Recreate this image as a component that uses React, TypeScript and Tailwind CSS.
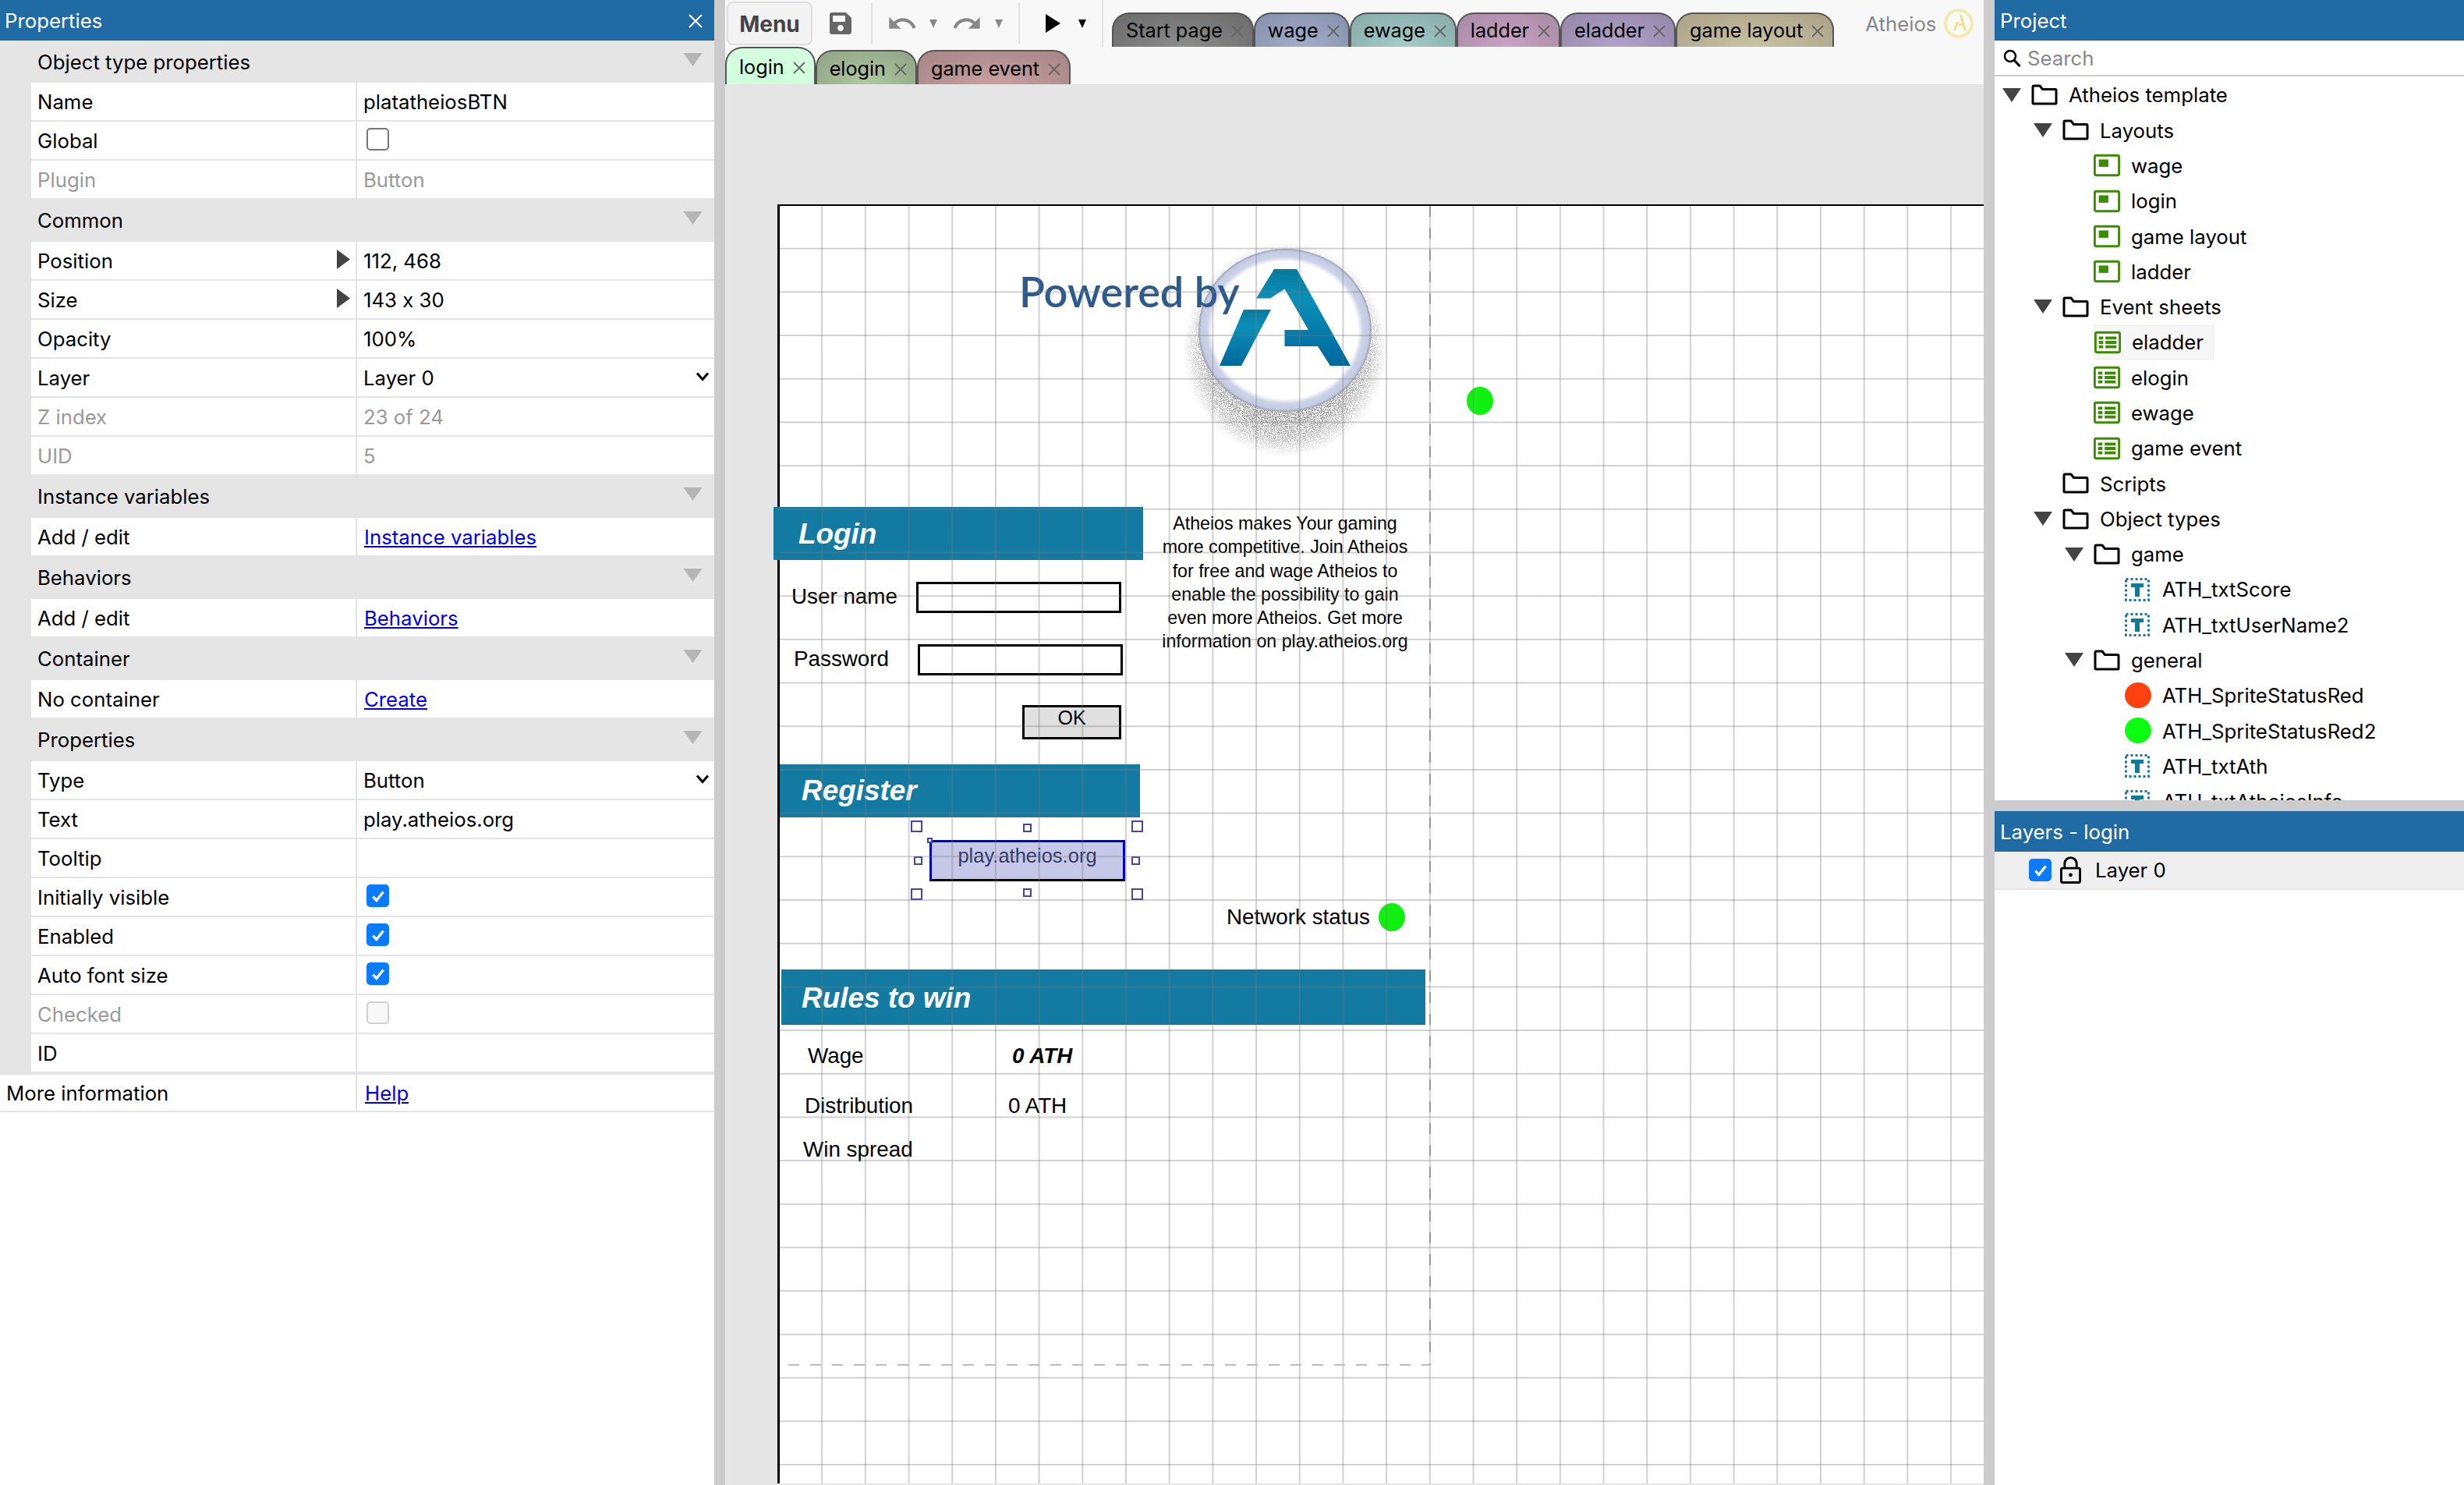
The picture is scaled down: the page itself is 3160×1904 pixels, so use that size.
import type { ReactNode } from "react";
import { FaSave } from "react-icons/fa";
import { MdRedo, MdUndo } from "react-icons/md";

type PropRow =
  | { kind: "section"; label: string; first?: boolean }
  | {
      kind: "row";
      label: string;
      value?: string;
      link?: string;
      check?: "on" | "off" | "disabled";
      muted?: boolean;
      arrow?: boolean;
      select?: boolean;
      last?: boolean;
    };

const propRows: PropRow[] = [
  { kind: "section", label: "Object type properties", first: true },
  { kind: "row", label: "Name", value: "platatheiosBTN" },
  { kind: "row", label: "Global", check: "off" },
  { kind: "row", label: "Plugin", value: "Button", muted: true, last: true },
  { kind: "section", label: "Common" },
  { kind: "row", label: "Position", value: "112, 468", arrow: true },
  { kind: "row", label: "Size", value: "143 x 30", arrow: true },
  { kind: "row", label: "Opacity", value: "100%" },
  { kind: "row", label: "Layer", value: "Layer 0", select: true },
  { kind: "row", label: "Z index", value: "23 of 24", muted: true },
  { kind: "row", label: "UID", value: "5", muted: true, last: true },
  { kind: "section", label: "Instance variables" },
  { kind: "row", label: "Add / edit", link: "Instance variables", last: true },
  { kind: "section", label: "Behaviors" },
  { kind: "row", label: "Add / edit", link: "Behaviors", last: true },
  { kind: "section", label: "Container" },
  { kind: "row", label: "No container", link: "Create", last: true },
  { kind: "section", label: "Properties" },
  { kind: "row", label: "Type", value: "Button", select: true },
  { kind: "row", label: "Text", value: "play.atheios.org" },
  { kind: "row", label: "Tooltip" },
  { kind: "row", label: "Initially visible", check: "on" },
  { kind: "row", label: "Enabled", check: "on" },
  { kind: "row", label: "Auto font size", check: "on" },
  { kind: "row", label: "Checked", check: "disabled", muted: true },
  { kind: "row", label: "ID" },
];

function CheckBox({ state }: { state: "on" | "off" | "disabled" }) {
  if (state === "on") {
    return (
      <span className="flex h-[29px] w-[29px] items-center justify-center rounded-[5px] bg-[#0a7bff]">
        <svg viewBox="0 0 20 20" className="h-[22px] w-[22px]">
          <path d="M4 10.5l4 4.5 8-10" fill="none" stroke="#fff" strokeWidth="3" />
        </svg>
      </span>
    );
  }
  if (state === "disabled") {
    return <span className="block h-[29px] w-[29px] rounded-[5px] border-2 border-[#d0d0d0] bg-[#f8f8f8]" />;
  }
  return <span className="block h-[29px] w-[29px] rounded-[5px] border-2 border-[#767676] bg-white" />;
}

function Chevron() {
  return (
    <svg viewBox="0 0 18 12" className="absolute right-[6px] top-[17px] h-[12px] w-[18px]">
      <path d="M2 1.5L9 9.500l7-8" fill="none" stroke="#000" strokeWidth="3" />
    </svg>
  );
}

function PropertiesPanel() {
  return (
    <div className="flex w-[916px] shrink-0 flex-col bg-white">
      <div className="flex h-[52px] items-center justify-between bg-[#206ba4] pl-[6px] pr-[14px] pt-[2px] text-white">
        <span>Properties</span>
        <svg viewBox="0 0 20 20" className="h-[20px] w-[20px]">
          <path d="M2 2l16 16M18 2L2 18" stroke="#fff" strokeWidth="2" />
        </svg>
      </div>
      {propRows.map((row, i) =>
        row.kind === "section" ? (
          <div
            key={i}
            className={`flex items-center justify-between bg-[#e5e5e5] pl-[48px] pr-[15px] pt-[2px] ${row.first ? "h-[54px]" : "h-[56px]"}`}
          >
            <span>{row.label}</span>
            <svg viewBox="0 0 24 17" className="mb-[8px] h-[17px] w-[25px]">
              <path d="M0 0h24L12 17z" fill="#b5b5b5" />
            </svg>
          </div>
        ) : (
          <div key={i} className="bg-[#e5e5e5] pl-[40px]">
            <div className={`flex h-[48px] bg-white ${row.last ? "" : "mb-[2px]"}`}>
              <div
                className={`relative flex w-[418px] shrink-0 items-center border-r-2 border-[#e5e5e5] pl-[8px] pt-[2px] ${row.muted ? "text-[#999]" : ""}`}
              >
                {row.label}
                {row.arrow && (
                  <svg viewBox="0 0 17 25" className="absolute right-[7px] top-[10px] h-[25px] w-[17px]">
                    <path d="M0 0l17 12.5L0 25z" fill="#444" />
                  </svg>
                )}
              </div>
              <div className={`relative flex flex-1 items-center pl-[8px] pt-[2px] ${row.muted ? "text-[#999]" : ""}`}>
                {row.value}
                {row.link && <a className="pl-[1px] text-[#0000ee] underline">{row.link}</a>}
                {row.check && (
                  <span className="mb-[5px] pl-[4px]">
                    <CheckBox state={row.check} />
                  </span>
                )}
                {row.select && <Chevron />}
              </div>
            </div>
          </div>
        ),
      )}
      <div className="flex h-[50px] border-y-2 border-[#e5e5e5]">
        <div className="flex w-[458px] items-center border-r-2 border-[#e5e5e5] pl-[8px] pt-[2px]">More information</div>
        <div className="flex items-center pl-[10px] pt-[2px]">
          <a className="text-[#0000ee] underline">Help</a>
        </div>
      </div>
    </div>
  );
}

function Tab({ label, tone, active, low }: { label: string; tone: string; active?: boolean; low?: boolean }) {
  return (
    <div
      className={`flex items-center rounded-t-[22px] border-x-2 border-t-2 border-[#555] pl-[16px] pr-[11px] text-[25.200px] text-black ${low ? "pt-[4px]" : "pt-[2px]"} ${active ? "h-[48px]" : "h-[44px]"} ${tone}`}
    >
      <span>{label}</span>
      <svg viewBox="0 0 16 16" className="ml-[11px] h-[16px] w-[16px]">
        <path d="M1 1l14 14M15 1L1 15" stroke="#666" strokeWidth="1.8" />
      </svg>
    </div>
  );
}

function Caret({ dark }: { dark?: boolean }) {
  return (
    <svg viewBox="0 0 10 11" className="h-[11px] w-[10px]">
      <path d="M0 0h10L5 11z" fill={dark ? "#000" : "#888"} />
    </svg>
  );
}

function Toolbar() {
  return (
    <div className="h-[108px] bg-[#f8f8f8]">
      <div className="flex h-[60px] items-end pl-[2px]">
        <div className="mb-[2px] flex h-[56px] w-[110px] items-center justify-center rounded-[8px] border-2 border-[#dedede] bg-[#f3f3f3] pt-[2px] text-[28px] font-bold text-[#444]">
          Menu
        </div>
        <div className="mb-[4px] flex h-[52px] items-center self-end">
          <FaSave className="ml-[21px] h-[32px] w-[30px] text-[#666]" />
          <div className="ml-[24px] h-[52px] w-[2px] bg-[#e2e2e2]" />
          <MdUndo className="ml-[18px] h-[44px] w-[40px] text-[#888]" />
          <span className="ml-[15px]">
            <Caret />
          </span>
          <MdRedo className="ml-[18px] h-[44px] w-[40px] text-[#888]" />
          <span className="ml-[16px]">
            <Caret />
          </span>
          <div className="ml-[20px] h-[52px] w-[2px] bg-[#e2e2e2]" />
          <svg viewBox="0 0 19 24" className="ml-[33px] h-[24px] w-[19px]">
            <path d="M0 0l19 12L0 24z" fill="#000" />
          </svg>
          <span className="ml-[23px]">
            <Caret dark />
          </span>
          <div className="ml-[20px] h-[60px] w-[2px] bg-[#e2e2e2]" />
        </div>
        <div className="ml-[11px] flex">
          <Tab label="Start page" tone="bg-[radial-gradient(ellipse_at_50%_100%,#8c8c8c,#6a6a6a)]" />
          <Tab label="wage" tone="bg-[radial-gradient(ellipse_at_50%_100%,#a2aecb,#8490ab)]" />
          <Tab label="ewage" tone="bg-[radial-gradient(ellipse_at_50%_100%,#a2cdc9,#87aaa7)]" />
          <Tab label="ladder" tone="bg-[radial-gradient(ellipse_at_50%_100%,#c9a2c4,#a78aa3)]" />
          <Tab label="eladder" tone="bg-[radial-gradient(ellipse_at_50%_100%,#b2a2cb,#9487a8)]" />
          <Tab label="game layout" tone="bg-[radial-gradient(ellipse_at_50%_100%,#c9c2a2,#a9a287)]" />
        </div>
        <span className="mb-[9px] ml-[40px] text-[#888]">Atheios</span>
        <svg viewBox="0 0 38 38" className="mb-[11px] ml-[10px] h-[38px] w-[38px]">
          <circle cx="19" cy="19" r="17" fill="#fbfaf0" stroke="#f3e9b4" strokeWidth="4" />
          <path d="M20 8h3l6 20h-3l-2-6h-5v-3h4zM16 17h3l-4 11h-3z" fill="#eadf9c" />
        </svg>
      </div>
      <div className="flex h-[48px] items-end">
        <Tab label="login" active low tone="bg-[radial-gradient(ellipse_at_50%_100%,#ccffd9,#d6fde0)]" />
        <Tab label="elogin" low tone="bg-[radial-gradient(ellipse_at_50%_100%,#aec9a0,#8fa384)]" />
        <Tab label="game event" low tone="bg-[radial-gradient(ellipse_at_50%_100%,#c9a0a0,#a58585)]" />
      </div>
    </div>
  );
}

function PoweredLogo() {
  return (
    <svg viewBox="0 0 300 310" className="absolute left-[500px] top-[26px] h-[310px] w-[300px]">
      <defs>
        <radialGradient id="halo" cx="50%" cy="50%" r="50%">
          <stop offset="0.66" stopColor="#8a8a8a" stopOpacity="0.95" />
          <stop offset="0.85" stopColor="#999" stopOpacity="0.65" />
          <stop offset="1" stopColor="#aaa" stopOpacity="0" />
        </radialGradient>
        <radialGradient id="core" cx="50%" cy="50%" r="50%">
          <stop offset="0.84" stopColor="#fff" />
          <stop offset="0.9" stopColor="#ccd3e8" />
          <stop offset="0.97" stopColor="#c3cbe3" />
          <stop offset="1" stopColor="#9a9fb2" />
        </radialGradient>
        <linearGradient id="aFill" x1="0" y1="0" x2="0" y2="1">
          <stop offset="0" stopColor="#087a9c" />
          <stop offset="0.3" stopColor="#0a8fb9" />
          <stop offset="1" stopColor="#00689c" />
        </linearGradient>
        <filter id="grain" x="0" y="0" width="100%" height="100%">
          <feTurbulence type="fractalNoise" baseFrequency="1.1" numOctaves="2" seed="4" result="n" />
          <feColorMatrix
            in="n"
            type="matrix"
            values="0 0 0 0 0  0 0 0 0 0  0 0 0 0 0  0 0 0 5 -2"
            result="mask"
          />
          <feComposite in="SourceGraphic" in2="mask" operator="in" />
        </filter>
      </defs>
      <ellipse cx="148" cy="158" rx="131" ry="138" fill="url(#halo)" filter="url(#grain)" />
      <ellipse cx="148" cy="133.5" rx="111" ry="104.500" fill="url(#core)" />
      <path
        d="M134 55h29l69 124h-26l-16-25h-42.500v-21H178L147.500 80.500 129 92.400h-18z"
        fill="url(#aFill)"
      />
      <path d="M95 107h35l-38 72H64z" fill="url(#aFill)" />
    </svg>
  );
}

function Handle({ className }: { className: string }) {
  return <div className={`absolute border-2 border-[#4545ad] bg-white ${className}`} />;
}

function Bar({ className, children }: { className: string; children: ReactNode }) {
  return (
    <div
      className={`absolute flex items-center bg-[#137ba1] text-[36.900px] font-bold italic text-white ${className}`}
    >
      {children}
    </div>
  );
}

function Canvas() {
  return (
    <div className="relative ml-[67px] mt-[154px] h-[1640px] w-[1547px] border-l-[3px] border-t-2 border-black bg-white font-['Liberation_Sans',Arial,sans-serif] text-[27.800px] text-black">
      <PoweredLogo />
      <div className="absolute left-[307px] top-[80px] font-['Lato',sans-serif] text-[54px] font-semibold leading-[60px] text-[#2c5a8c]">
        Powered by
      </div>
      <div className="absolute left-[881px] top-[232px] h-[36px] w-[34px] rounded-[50%] bg-[#10f010]" />

      <Bar className="-left-[8px] top-[386px] h-[68px] w-[474px] border-l-[2px] border-[#137ba1] pl-[30px] pt-[2px]">Login</Bar>
      <div className="absolute left-[487px] top-[392px] w-[322px] whitespace-nowrap text-center text-[23.200px] leading-[30.300px]">
        Atheios makes Your gaming
        <br />
        more competitive. Join Atheios
        <br />
        for free and wage Atheios to
        <br />
        enable the possibility to gain
        <br />
        even more Atheios. Get more
        <br />
        information on play.atheios.org
      </div>
      <div className="absolute left-[15px] top-[485px] leading-[32px]">User name</div>
      <div className="absolute left-[175px] top-[482px] h-[40px] w-[263px] border-[3px] border-black bg-white" />
      <div className="absolute left-[18px] top-[565px] leading-[32px]">Password</div>
      <div className="absolute left-[177px] top-[562px] h-[40px] w-[263px] border-[3px] border-black bg-white" />
      <div className="absolute left-[311px] top-[640px] h-[44px] w-[127px] border-[3px] border-black bg-[#e0e0e0] text-center text-[25px] leading-[26px]">
        OK
      </div>

      <Bar className="left-0 top-[716px] h-[68px] w-[462px] pl-[28px]">Register</Bar>
      <div className="absolute left-[192px] top-[813px] h-[53px] w-[251px] border-[3px] border-[#0000cc] border-b-black bg-[#c6c8e8] text-center text-[25.500px] leading-[35px] text-[#333a66]">
        play.atheios.org
      </div>
      <Handle className="left-[168px] top-[788px] h-[15px] w-[15px]" />
      <Handle className="left-[312px] top-[792px] h-[11px] w-[11px]" />
      <Handle className="left-[451px] top-[788px] h-[15px] w-[15px]" />
      <Handle className="left-[172px] top-[834px] h-[11px] w-[11px]" />
      <Handle className="left-[451px] top-[834px] h-[11px] w-[11px]" />
      <Handle className="left-[168px] top-[875px] h-[15px] w-[15px]" />
      <Handle className="left-[312px] top-[875px] h-[11px] w-[11px]" />
      <Handle className="left-[451px] top-[875px] h-[15px] w-[15px]" />
      <Handle className="left-[189px] top-[810px] h-[7px] w-[7px] border" />

      <div className="absolute left-[573px] top-[896px] leading-[32px]">Network status</div>
      <div className="absolute left-[768px] top-[894px] h-[36px] w-[34px] rounded-[50%] bg-[#10f010]" />

      <Bar className="left-[2px] top-[979px] h-[71px] w-[826px] pl-[26px] pt-[2px]">Rules to win</Bar>
      <div className="absolute left-[36px] top-[1074px] leading-[32px]">Wage</div>
      <div className="absolute left-[298px] top-[1074px] font-bold italic leading-[32px]">0 ATH</div>
      <div className="absolute left-[32px] top-[1138px] leading-[32px]">Distribution</div>
      <div className="absolute left-[293px] top-[1138px] leading-[32px]">0 ATH</div>
      <div className="absolute left-[30px] top-[1194px] leading-[32px]">Win spread</div>

      <div className="absolute inset-0 bg-[linear-gradient(to_right,rgba(120,120,120,0.34)_1.500px,transparent_1.500px),linear-gradient(to_bottom,rgba(120,120,120,0.34)_1.500px,transparent_1.500px)] bg-[size:55.700px_55.700px] bg-[position:-2.500px_-2px]" />
      <div className="absolute left-[833px] top-0 h-[1487px] w-[2px] bg-[repeating-linear-gradient(to_bottom,#999_0,#999_14px,transparent_14px,transparent_28px)]" />
      <div className="absolute left-[11px] top-[1485px] h-[2px] w-[824px] bg-[repeating-linear-gradient(to_right,#bbb_0,#bbb_14px,transparent_14px,transparent_28px)]" />
    </div>
  );
}

function FolderIcon() {
  return (
    <svg viewBox="0 0 34 27" className="h-[27px] w-[34px]">
      <path
        d="M2 6V3.500C2 2.500 2.500 2 3.500 2H11l3.500 4.500H31c.6 0 1 .4 1 1V24c0 .6-.4 1-1 1H3c-.6 0-1-.4-1-1z"
        fill="#fff"
        stroke="#000"
        strokeWidth="3"
        strokeLinejoin="round"
      />
    </svg>
  );
}

function LayoutIcon() {
  return (
    <svg viewBox="0 0 36 30" className="h-[30px] w-[36px]">
      <rect x="1.500" y="1.500" width="33" height="27" rx="2" fill="#fff" stroke="#3a8c00" strokeWidth="3" />
      <rect x="7" y="7" width="13" height="10" fill="#3a8c00" />
    </svg>
  );
}

function SheetIcon() {
  return (
    <svg viewBox="0 0 36 30" className="h-[30px] w-[36px]">
      <rect x="1.500" y="1.500" width="33" height="27" rx="2" fill="#fff" stroke="#3a8c00" strokeWidth="3" />
      <path
        d="M6 7h6v4H6zM15 7h15v4H15zM6 13h6v4H6zM15 13h15v4H15zM6 19h6v4H6zM15 19h15v4H15z"
        fill="#3a8c00"
      />
    </svg>
  );
}

function TextIcon() {
  return (
    <svg viewBox="0 0 32 30" className="h-[30px] w-[32px]">
      <rect x="1.500" y="1.500" width="29" height="27" fill="none" stroke="#117a9a" strokeWidth="3" strokeDasharray="3 3" />
      <path d="M8 7h16v5h-5v12h-6V12H8z" fill="#117a9a" />
    </svg>
  );
}

type TreeItem = {
  label: string;
  depth: 0 | 1 | 2 | 3;
  icon: "folder" | "layout" | "sheet" | "text" | "red" | "green";
  open?: boolean;
  hot?: boolean;
};

const treeItems: TreeItem[] = [
  { label: "Atheios template", depth: 0, icon: "folder", open: true },
  { label: "Layouts", depth: 1, icon: "folder", open: true },
  { label: "wage", depth: 2, icon: "layout" },
  { label: "login", depth: 2, icon: "layout" },
  { label: "game layout", depth: 2, icon: "layout" },
  { label: "ladder", depth: 2, icon: "layout" },
  { label: "Event sheets", depth: 1, icon: "folder", open: true },
  { label: "eladder", depth: 2, icon: "sheet", hot: true },
  { label: "elogin", depth: 2, icon: "sheet" },
  { label: "ewage", depth: 2, icon: "sheet" },
  { label: "game event", depth: 2, icon: "sheet" },
  { label: "Scripts", depth: 1, icon: "folder" },
  { label: "Object types", depth: 1, icon: "folder", open: true },
  { label: "game", depth: 2, icon: "folder", open: true },
  { label: "ATH_txtScore", depth: 3, icon: "text" },
  { label: "ATH_txtUserName2", depth: 3, icon: "text" },
  { label: "general", depth: 2, icon: "folder", open: true },
  { label: "ATH_SpriteStatusRed", depth: 3, icon: "red" },
  { label: "ATH_SpriteStatusRed2", depth: 3, icon: "green" },
  { label: "ATH_txtAth", depth: 3, icon: "text" },
  { label: "ATH_txtAtheiosInfo", depth: 3, icon: "text" },
];

const indent = ["pl-[10px]", "pl-[50px]", "pl-[90px]", "pl-[130px]"];

function TreeIcon({ icon }: { icon: TreeItem["icon"] }) {
  if (icon === "folder") return <FolderIcon />;
  if (icon === "layout") return <LayoutIcon />;
  if (icon === "sheet") return <SheetIcon />;
  if (icon === "text") return <TextIcon />;
  return <span className={`block h-[33px] w-[34px] rounded-[50%] ${icon === "red" ? "bg-[#ff4010]" : "bg-[#0cff10]"}`} />;
}

function ProjectPanel() {
  return (
    <div className="flex min-w-0 flex-1 flex-col bg-white">
      <div className="flex h-[52px] items-center bg-[#206ba4] pl-[7px] pt-[2px] text-white">Project</div>
      <div className="flex h-[46px] items-center border-b-2 border-[#ccc] pl-[10px] text-[#888]">
        <svg viewBox="0 0 24 24" className="h-[24px] w-[24px]">
          <circle cx="10" cy="10" r="7" fill="none" stroke="#000" strokeWidth="2.500" />
          <path d="M15 15l7.500 8" stroke="#000" strokeWidth="3" />
        </svg>
        <span className="ml-[8px] pt-[2px]">Search</span>
      </div>
      <div className="h-[928px] overflow-hidden pt-px">
        {treeItems.map((item) => (
          <div key={item.label} className={`flex h-[45.300px] items-center ${indent[item.depth]}`}>
            <span className="w-[24px] shrink-0">
              {item.open && (
                <svg viewBox="0 0 24 18" className="h-[18px] w-[24px]">
                  <path d="M0 0h24L12 18z" fill="#444" />
                </svg>
              )}
            </span>
            <div
              className={`ml-[13px] flex h-[44px] items-center ${item.hot ? "border border-[#ececec] bg-[#f6f6f6] pr-[12px]" : ""}`}
            >
              <span className="flex w-[34px] shrink-0 items-center">
                <TreeIcon icon={item.icon} />
              </span>
              <span className="ml-[14px] whitespace-nowrap pt-[2px]">{item.label}</span>
            </div>
          </div>
        ))}
      </div>
      <div className="h-[14px] bg-[#ccc]" />
      <div className="flex h-[52px] items-center bg-[#206ba4] pl-[7px] pt-[2px] text-white">Layers - login</div>
      <div className="flex h-[49px] items-center border-b-2 border-[#e5e5e5] bg-[#efefef] pl-[44px]">
        <CheckBox state="on" />
        <svg viewBox="0 0 28 36" className="ml-[11px] h-[36px] w-[27px]">
          <path d="M6 15V9a8 8 0 0 1 16 0v6" fill="none" stroke="#000" strokeWidth="3" />
          <rect x="1.500" y="15" width="25" height="19" rx="2" fill="none" stroke="#000" strokeWidth="3" />
          <circle cx="14" cy="24" r="2.500" fill="#000" />
        </svg>
        <span className="ml-[18px] pt-[2px]">Layer 0</span>
      </div>
    </div>
  );
}

export default function App() {
  return (
    <div className="flex h-[1904px] w-[3160px] overflow-hidden bg-white font-['Inter',sans-serif] text-[25.750px] text-black [font-feature-settings:'calt'_0]">
      <PropertiesPanel />
      <div className="w-[14px] shrink-0 bg-[#ccc]" />
      <div className="flex w-[1614px] shrink-0 flex-col">
        <Toolbar />
        <div className="relative flex-1 overflow-hidden bg-[#e5e5e5]">
          <Canvas />
        </div>
      </div>
      <div className="w-[14px] shrink-0 bg-[#ccc]" />
      <ProjectPanel />
    </div>
  );
}
